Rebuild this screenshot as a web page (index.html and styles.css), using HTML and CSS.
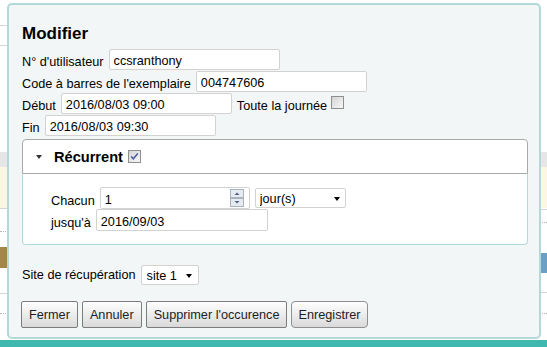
FILE: index.html
```html
<!DOCTYPE html>
<html lang="fr">
<head>
  <meta charset="UTF-8">
  <title>Modifier la réservation</title>
  <link rel="stylesheet" href="styles.css">
</head>
<body>
  <div class="page">
    <div class="bg">
      <div class="bg-col bg-left">
        <div></div><div class="rule"></div><div></div><div class="rule"></div><div></div>
        <div class="grey"></div><div class="cream"></div><div class="rule"></div><div></div>
        <div class="dots"></div><div></div><div class="brown"></div><div></div>
        <div class="rule"></div><div></div><div class="dots"></div><div></div>
      </div>
      <div class="bg-col bg-right">
        <div></div><div class="grey"></div><div class="cream"></div><div></div>
        <div class="rule"></div><div></div><div class="dots"></div><div></div>
        <div class="blue"></div><div></div><div class="rule"></div><div></div>
        <div class="dots"></div><div></div>
      </div>
    </div>
    <div class="teal"></div>
  </div>

  <div class="dialog">
    <h2>Modifier</h2>
    <div class="form-row">
      <label for="patron">N° d'utilisateur</label>
      <input class="text-input" type="text" id="patron" value="ccsranthony">
    </div>
    <div class="form-row">
      <label for="barcode">Code à barres de l'exemplaire</label>
      <input class="text-input" type="text" id="barcode" value="004747606">
    </div>
    <div class="form-row">
      <label for="start">Début</label>
      <input class="text-input" type="text" id="start" value="2016/08/03 09:00">
      <span class="all-day">Toute la journée</span>
      <span class="check"></span>
    </div>
    <div class="form-row">
      <label for="end">Fin</label>
      <input class="text-input" type="text" id="end" value="2016/08/03 09:30">
    </div>

    <div class="recurrent">
      <div class="recurrent-head">
        <span class="caret"></span>
        <span class="recurrent-title">Récurrent</span>
        <span class="check checked">
          <svg width="11" height="11" viewBox="0 0 11 11"><path d="M2.2 5.4 L4.3 7.8 L8.8 2.6" fill="none" stroke="#4a5ba3" stroke-width="1.5"/></svg>
        </span>
      </div>
      <div class="recurrent-body">
        <div class="recur-row">
          <label for="every">Chacun</label>
          <div class="spinner">
            <input class="text-input tall" type="text" id="every" value="1">
            <svg class="spin" width="14" height="18" viewBox="0 0 14 18">
              <rect x="0.5" y="0.5" width="13" height="8" fill="#e6ebf1" stroke="#a9b3bf"/>
              <rect x="0.5" y="9.5" width="13" height="8" fill="#e6ebf1" stroke="#a9b3bf"/>
              <path d="M4.5 6 L7 3.5 L9.5 6 Z" fill="#4d6185"/>
              <path d="M4.5 12 L7 14.5 L9.5 12 Z" fill="#4d6185"/>
            </svg>
          </div>
          <span class="select-wrap unit">
            <select><option>jour(s)</option></select>
          </span>
        </div>
        <div class="recur-row">
          <label for="until">jusqu'à</label>
          <input class="text-input tall until" type="text" id="until" value="2016/09/03">
        </div>
      </div>
    </div>

    <div class="site-row">
      <label for="site">Site de récupération</label>
      <span class="select-wrap site">
        <select id="site"><option>site 1</option></select>
      </span>
    </div>

    <div class="buttons">
      <button class="btn">Fermer</button>
      <button class="btn">Annuler</button>
      <button class="btn">Supprimer l'occurence</button>
      <button class="btn save">Enregistrer</button>
    </div>
  </div>
</body>
</html>
```

FILE: styles.css
```css
body {
  margin: 0;
  width: 547px;
  height: 347px;
  overflow: hidden;
  font-family: "Liberation Sans", Arial, sans-serif;
  font-size: 12.7px;
  color: #000;
  background: #fff;
}
.page {
  display: flex;
  flex-direction: column;
  height: 347px;
}
.bg {
  flex: 1;
  display: flex;
}
.bg-col {
  display: grid;
}
.bg-left {
  width: 274px;
  grid-template-rows: 25px 1px 19px 1px 106px 15px 41px 1px 22px 1px 15px 21px 25px 1px 19px 1px 1fr;
}
.bg-right {
  flex: 1;
  grid-template-rows: 152px 15px 41px 1px 1px 12px 1px 30px 20px 19px 1px 20px 1px 1fr;
}
.rule {
  background: #d4d4d4;
}
.dots {
  border-top: 1px dotted #b8b8b8;
}
.grey {
  background: #e6e6e6;
}
.cream {
  background: #fcf6e3;
}
.brown {
  background: #a38746;
}
.blue {
  background: #6b9fc3;
}
.teal {
  height: 7px;
  background: #3fb8b0;
}
.dialog {
  position: absolute;
  left: 7px;
  top: 3px;
  width: 534px;
  height: 336px;
  box-sizing: border-box;
  border: 2px solid #b3d8da;
  border-radius: 5px;
  background: #f3f6f7;
  padding: 19px 11px 0 13px;
}
.dialog h2 {
  margin: 0 0 4px;
  font-size: 17px;
  line-height: 20px;
}
.form-row {
  display: flex;
  align-items: flex-end;
  height: 22px;
}
.form-row label,
.recur-row label,
.site-row label {
  line-height: 16px;
  margin-right: 5px;
}
.text-input {
  width: 171px;
  height: 21px;
  box-sizing: border-box;
  border: 1px solid #d2d2d2;
  border-radius: 2px;
  padding: 3px 4px 0;
  margin: 0;
  font: inherit;
  color: #000;
  background: #fff;
}
.text-input.tall {
  height: 22px;
}
.all-day {
  line-height: 16px;
  margin-left: 5px;
}
.check {
  display: inline-block;
  width: 13px;
  height: 13px;
  box-sizing: border-box;
  border: 1px solid #8e8f8f;
  background: linear-gradient(135deg, #d4d4d4, #f7f7f7);
  margin: 0 0 5px 4px;
}
.check svg {
  display: block;
}
.recurrent {
  margin-top: 3px;
  width: 506px;
}
.recurrent-head {
  height: 33px;
  display: flex;
  align-items: center;
  padding-left: 13px;
  border: 1px solid #a9a9a9;
  border-radius: 4px 4px 0 0;
  background: #fff;
}
.caret {
  width: 0;
  height: 0;
  border-left: 3px solid transparent;
  border-right: 3px solid transparent;
  border-top: 4px solid #333;
  margin-right: 12px;
}
.recurrent-title {
  font-weight: bold;
  font-size: 14.6px;
}
.recurrent-head .check {
  margin: 0 0 0 5px;
}
.recurrent-body {
  border: 1px solid #b3d8da;
  border-top: none;
  border-radius: 0 0 4px 4px;
  background: #fff;
  padding: 13px 28px;
}
.recur-row {
  display: flex;
  align-items: flex-end;
  height: 22px;
}
.spinner {
  position: relative;
}
.spinner .text-input {
  width: 150px;
}
.spin {
  position: absolute;
  right: 6px;
  top: 2px;
}
.until {
  width: 172px;
}
.select-wrap {
  position: relative;
  display: inline-block;
}
.select-wrap select {
  appearance: none;
  -webkit-appearance: none;
  box-sizing: border-box;
  height: 20px;
  border: 1px solid #d2d2d2;
  border-radius: 2px;
  background: #fff;
  font: inherit;
  color: #000;
  padding: 1px 4px 0;
  margin: 0;
}
.select-wrap::after {
  content: "";
  position: absolute;
  top: 9px;
  width: 0;
  height: 0;
  border-left: 3.5px solid transparent;
  border-right: 3.5px solid transparent;
  border-top: 4px solid #000;
}
.unit {
  margin: 0 0 1px 5px;
}
.unit select {
  width: 91px;
}
.unit::after {
  right: 6px;
}
.site-row {
  margin-top: 20px;
  display: flex;
  align-items: flex-end;
  height: 20px;
}
.site-row label {
  padding-bottom: 2px;
}
.site select {
  width: 58px;
  padding-left: 5px;
}
.site::after {
  right: 7px;
}
.buttons {
  margin: 16px 0 0 -1px;
  display: flex;
  gap: 4px;
}
.btn {
  height: 27px;
  padding: 0 7px;
  border: 1px solid #7c7c7c;
  border-radius: 2px;
  background: linear-gradient(#fefefe, #dadada);
  font: inherit;
  color: #1e1e1e;
  margin: 0;
}
.btn.save {
  border-color: #8f8f8f;
  border-radius: 4px;
  padding: 0 6px;
}
```
